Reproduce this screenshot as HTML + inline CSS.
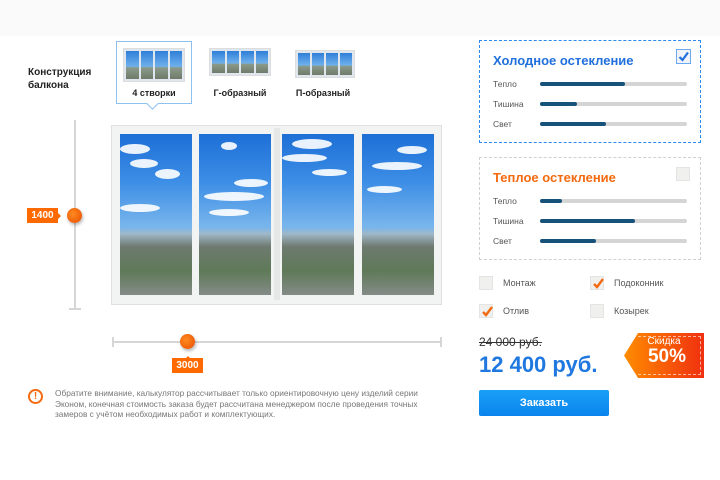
<!DOCTYPE html>
<html><head><meta charset="utf-8"><style>
*{margin:0;padding:0;box-sizing:border-box}
body{width:720px;height:480px;background:#fff;font-family:"Liberation Sans","DejaVu Sans",sans-serif;position:relative;overflow:hidden}
.a{position:absolute}
.top{left:0;top:0;width:720px;height:36px;background:#fafafa}
.lbl{font-size:10px;font-weight:bold;color:#222;line-height:13px}
.th{width:72px;height:37px;background:#dfe6ee;border:1px solid #ddd;display:flex;gap:2px;padding:2px}
.th i{flex:1;background:linear-gradient(#2f7fd8 0,#6fb0ec 55%,#8a9a8a 60%,#6f7a6a 100%)}
.cap{font-size:9px;font-weight:bold;color:#222;text-align:center}
.glass{top:134px;width:72px;height:161px;background:linear-gradient(#1d6fd6 0%,#3d8ee6 30%,#7ab6ec 58%,#9fb8c8 62%,#6e7a70 70%,#5f7a58 85%,#848b88 100%);overflow:hidden}
.cl{position:absolute;background:#fff;border-radius:50%;opacity:.9}
.ol{background:#ff6a00;color:#fff;font-size:10px;font-weight:bold;text-align:center;line-height:15px}
.knob{width:15px;height:15px;border-radius:50%;background:radial-gradient(circle at 40% 40%,#ff8a20,#e84d00);box-shadow:1px 2px 3px rgba(0,0,0,.3)}
.box{left:479px;width:222px;height:103px;border:1px dashed #2a8af0}
.bt{font-size:13px;font-weight:bold;position:absolute;left:13px;top:12px}
.rl{position:absolute;left:13px;font-size:8.5px;color:#555}
.bar{position:absolute;left:60px;width:147px;height:4px;background:#d5d5d5;border-radius:2px}
.bar b{display:block;height:4px;background:#17527a;border-radius:2px}
.cb{width:14px;height:14px;background:#f0f0ee;border:1px solid #e4e4e2}
.opt{font-size:9px;color:#555}
.ck svg{position:absolute;left:1px;top:0}
</style></head><body>
<div class="a top"></div>
<div class="a lbl" style="left:28px;top:66px">Конструкция<br>балкона</div>
<div class="a" style="left:116px;top:41px;width:76px;height:63px;border:1px solid #8ec0f0;background:#fff"></div>
<div class="a" style="left:148px;top:99px;width:9px;height:9px;background:#fff;border-right:1px solid #8ec0f0;border-bottom:1px solid #8ec0f0;transform:rotate(45deg)"></div>
<div class="a th" style="left:123px;top:48px;width:62px;height:34px"><i></i><i></i><i></i><i></i></div>
<div class="a th" style="left:209px;top:48px;width:62px;height:28px"><i></i><i></i><i></i><i></i></div>
<div class="a th" style="left:295px;top:50px;width:60px;height:28px"><i></i><i></i><i></i><i></i></div>
<div class="a cap" style="left:116px;top:88px;width:76px">4 створки</div>
<div class="a cap" style="left:200px;top:88px;width:80px">Г-образный</div>
<div class="a cap" style="left:283px;top:88px;width:80px">П-образный</div>

<div class="a" style="left:74px;top:120px;width:2px;height:189px;background:#d6d6d6"></div>
<div class="a" style="left:69px;top:308px;width:12px;height:2px;background:#d6d6d6"></div>
<div class="a ol" style="left:27px;top:208px;width:31px">1400</div>
<div class="a" style="left:57px;top:212px;border:4px solid transparent;border-left-color:#ff6a00"></div>
<div class="a knob" style="left:67px;top:208px"></div>

<div class="a" style="left:111px;top:125px;width:331px;height:180px;background:#f2f3f3;border:1px solid #e0e0e0"></div>
<div class="a" style="left:274px;top:128px;width:6px;height:172px;background:#e6e7e7"></div>
<div class="a glass" style="left:120px"><div class="cl" style="left:0;top:10px;width:30px;height:10px"></div><div class="cl" style="left:10px;top:25px;width:28px;height:9px"></div><div class="cl" style="left:35px;top:35px;width:25px;height:10px"></div><div class="cl" style="left:0;top:70px;width:40px;height:8px"></div></div>
<div class="a glass" style="left:199px"><div class="cl" style="left:22px;top:8px;width:16px;height:8px"></div><div class="cl" style="left:35px;top:45px;width:34px;height:8px"></div><div class="cl" style="left:5px;top:58px;width:60px;height:9px"></div><div class="cl" style="left:10px;top:75px;width:40px;height:7px"></div></div>
<div class="a glass" style="left:282px"><div class="cl" style="left:10px;top:5px;width:40px;height:10px"></div><div class="cl" style="left:0;top:20px;width:45px;height:8px"></div><div class="cl" style="left:30px;top:35px;width:35px;height:7px"></div></div>
<div class="a glass" style="left:362px"><div class="cl" style="left:35px;top:12px;width:30px;height:8px"></div><div class="cl" style="left:10px;top:28px;width:50px;height:8px"></div><div class="cl" style="left:5px;top:52px;width:35px;height:7px"></div></div>

<div class="a" style="left:112px;top:341px;width:329px;height:2px;background:#d6d6d6"></div>
<div class="a" style="left:112px;top:337px;width:2px;height:10px;background:#d6d6d6"></div>
<div class="a" style="left:440px;top:337px;width:2px;height:10px;background:#d6d6d6"></div>
<div class="a knob" style="left:180px;top:334px"></div>
<div class="a" style="left:184px;top:352px;border:4px solid transparent;border-bottom-color:#ff6a00"></div>
<div class="a ol" style="left:172px;top:358px;width:31px">3000</div>

<div class="a" style="left:28px;top:389px;width:15px;height:15px;border:2px solid #f36a10;border-radius:50%;color:#f36a10;font-size:10px;font-weight:bold;text-align:center;line-height:11px">!</div>
<div class="a" style="left:55px;top:388px;width:390px;font-size:8.3px;line-height:10.7px;color:#777">Обратите внимание, калькулятор рассчитывает только ориентировочную цену изделий серии Эконом, конечная стоимость заказа будет рассчитана менеджером после проведения точных замеров с учётом необходимых работ и комплектующих.</div>

<div class="a box" style="top:40px">
<div class="bt" style="color:#1f6fdc">Холодное остекление</div>
<div class="a" style="left:196px;top:8px;width:15px;height:15px;border:1px solid #6aa8f0;background:#f0f4fa"><svg width="13" height="13" viewBox="0 0 13 13"><path d="M2.5 7 L5.5 10 L11 2.5" fill="none" stroke="#1f6fdc" stroke-width="2.2"/></svg></div>
<div class="rl" style="top:38px">Тепло</div><div class="bar" style="top:41px"><b style="width:85px"></b></div>
<div class="rl" style="top:58px">Тишина</div><div class="bar" style="top:61px"><b style="width:37px"></b></div>
<div class="rl" style="top:78px">Свет</div><div class="bar" style="top:81px"><b style="width:66px"></b></div>
</div>
<div class="a box" style="top:157px;border-color:#d0d0d0">
<div class="bt" style="color:#f36a10">Теплое остекление</div>
<div class="a cb" style="left:196px;top:9px"></div>
<div class="rl" style="top:38px">Тепло</div><div class="bar" style="top:41px"><b style="width:22px"></b></div>
<div class="rl" style="top:58px">Тишина</div><div class="bar" style="top:61px"><b style="width:95px"></b></div>
<div class="rl" style="top:78px">Свет</div><div class="bar" style="top:81px"><b style="width:56px"></b></div>
</div>

<div class="a cb" style="left:479px;top:276px"></div><div class="a opt" style="left:503px;top:278px">Монтаж</div>
<div class="a cb ck" style="left:590px;top:276px"><svg width="13" height="13" viewBox="0 0 13 13"><path d="M2 7 L5 10 L11 2" fill="none" stroke="#f36a10" stroke-width="2.4"/></svg></div><div class="a opt" style="left:614px;top:278px">Подоконник</div>
<div class="a cb ck" style="left:479px;top:304px"><svg width="13" height="13" viewBox="0 0 13 13"><path d="M2 7 L5 10 L11 2" fill="none" stroke="#f36a10" stroke-width="2.4"/></svg></div><div class="a opt" style="left:503px;top:306px">Отлив</div>
<div class="a cb" style="left:590px;top:304px"></div><div class="a opt" style="left:614px;top:306px">Козырек</div>

<div class="a" style="left:479px;top:335px;font-size:12px;color:#333;text-decoration:line-through">24 000 руб.</div>
<div class="a" style="left:479px;top:352px;font-size:22px;font-weight:bold;color:#1f78e0">12 400 руб.</div>
<div class="a" style="left:479px;top:390px;width:130px;height:26px;background:linear-gradient(#1aa0f8,#0a84ec);border-radius:2px;color:#fff;font-size:11px;font-weight:bold;text-align:center;line-height:26px">Заказать</div>

<div class="a" style="left:624px;top:333px;width:80px;height:45px;background:linear-gradient(90deg,#ff8c00,#f03010);clip-path:polygon(14px 0,100% 0,100% 100%,14px 100%,0 50%)"></div>
<div class="a" style="left:633px;top:336px;width:68px;height:39px;border:1px dashed rgba(255,255,255,.6);border-left:none"></div>
<div class="a" style="left:628px;top:336px;width:72px;text-align:center;color:#fff;font-size:10px;line-height:11px">Скидка</div>
<div class="a" style="left:636px;top:346px;width:62px;text-align:center;color:#fff;font-size:19px;font-weight:bold">50%</div>
</body></html>
